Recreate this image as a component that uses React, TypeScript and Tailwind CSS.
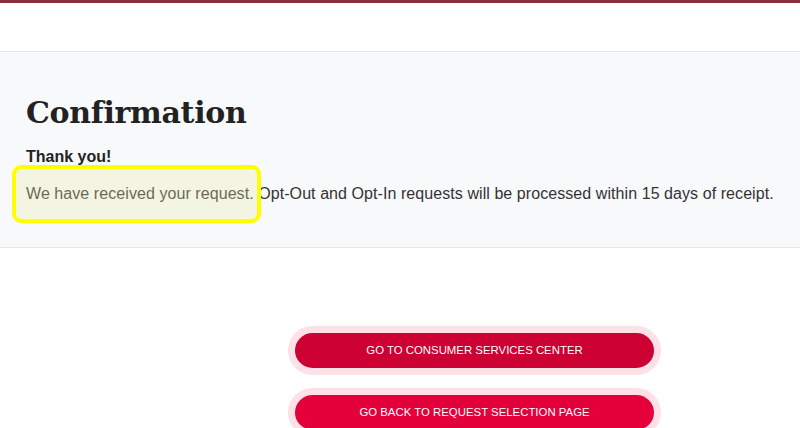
export default function App() {
  return (
    <div className="min-h-[428px] overflow-hidden bg-white font-['Liberation_Sans',Arial,sans-serif] text-[#333]">
      {/* brand bar */}
      <div className="h-[3px] bg-[#8b2b3b]" />
      <header className="h-[49px] border-b border-[#e6e6e6] bg-white" />

      {/* confirmation */}
      <section className="border-b border-[#e6e6e6] bg-[#f8f9fb] px-[26px] pt-[41px] pb-[42px]">
        <h1 className="font-['DejaVu_Serif',serif] text-[30px] leading-[40px] font-bold tracking-[-0.3px] text-[#222]">
          Confirmation
        </h1>
        <p className="mt-[13px] text-[16px] leading-[22px] font-bold text-[#222]">Thank you!</p>
        <p className="mt-[15px] text-[16px] leading-[22px] tracking-[0.07px] text-[#333]">
          <span className="relative">
            We have received your request.
            <span className="absolute -top-[20px] -bottom-[21px] -left-[14px] -right-[7px] rounded-[9px] border-4 border-[#ffff00] bg-[rgba(232,232,170,0.3)]" />
          </span>{' '}
          Opt-Out and Opt-In requests will be processed within 15 days of receipt.
        </p>
      </section>

      {/* actions */}
      <div className="mt-[78px] ml-[288px] flex w-[373px] flex-col gap-[13px]">
        <button className="rounded-full border-[7px] border-[#fde1e7] bg-[#cc0033] py-[10px] text-center text-[11.4px] leading-[15px] text-white uppercase">
          Go to Consumer Services Center
        </button>
        <button className="rounded-full border-[7px] border-[#fde1e7] bg-[#e4003b] py-[10px] text-center text-[11.4px] leading-[15px] text-white uppercase">
          Go back to Request Selection Page
        </button>
      </div>
    </div>
  );
}
